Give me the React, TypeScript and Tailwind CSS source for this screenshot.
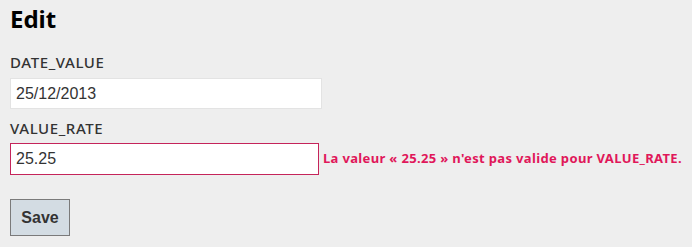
export default function App() {
  return (
    <div className="min-h-screen w-full bg-[#eeeeee] px-[10px] pt-[2px] font-['Noto_Sans',sans-serif]">
      <h1 className="text-[24px] font-bold leading-[34px] text-black">Edit</h1>
      <form className="mt-[16px] flex flex-col">
        <label className="text-[15px] font-medium leading-[20px] tracking-[0.6px] text-[#333333]">DATE_VALUE</label>
        <div className="mt-[6px] flex">
          <input
            defaultValue="25/12/2013"
            className="h-[31px] w-[312px] border border-[#e3e3e3] bg-white px-[5px] font-['Liberation_Sans',sans-serif] text-[16px] text-[#333333] outline-none"
          />
        </div>
        <label className="mt-[9px] text-[15px] font-medium leading-[20px] tracking-[0.6px] text-[#333333]">VALUE_RATE</label>
        <div className="mt-[5px] flex items-center gap-[4px]">
          <input
            defaultValue="25.25"
            className="h-[32px] w-[312px] border border-[#c5245a] bg-white px-[5px] font-['Liberation_Sans',sans-serif] text-[16px] text-[#333333] outline-none"
          />
          <span className="whitespace-nowrap text-[13px] font-bold tracking-[0.35px] text-[#e0175a]">
            La valeur « 25.25 » n'est pas valide pour VALUE_RATE.
          </span>
        </div>
        <div className="mt-[24px]">
          <button
            type="button"
            className="h-[37px] w-[60px] border border-[#7a7a7a] bg-[#d3dce3] font-['Liberation_Sans',sans-serif] text-[16px] font-bold text-[#333333]"
          >
            Save
          </button>
        </div>
      </form>
    </div>
  );
}
